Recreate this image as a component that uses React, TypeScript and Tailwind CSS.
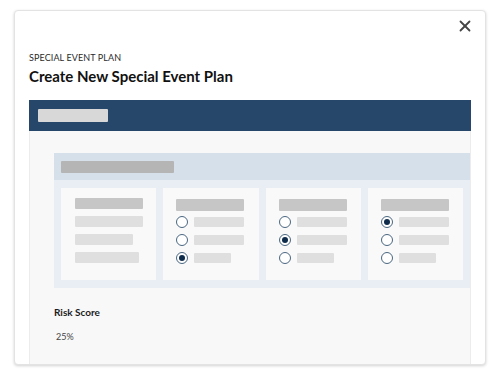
import React from "react";

type Column = {
  kind: "text" | "radio";
  lines: number[];
  selected?: number;
};

const columns: Column[] = [
  { kind: "text", lines: [68, 58, 64] },
  { kind: "radio", lines: [50, 50, 37], selected: 2 },
  { kind: "radio", lines: [50, 50, 37], selected: 1 },
  { kind: "radio", lines: [50, 50, 37], selected: 0 },
];

function Radio({ checked }: { checked: boolean }) {
  return (
    <span className="w-[12px] h-[12px] rounded-full border-[1.5px] border-[#4a6680] bg-white flex items-center justify-center shrink-0">
      {checked && <span className="w-[6px] h-[6px] rounded-full bg-[#0f2b4b]" />}
    </span>
  );
}

function PreviewCard({ col }: { col: Column }) {
  if (col.kind === "text") {
    return (
      <div className="bg-[#f9f9f9] h-[92px] pl-[14px] pt-[10px] flex flex-col gap-[7px]">
        <div className="w-[68px] h-[11px] rounded-[1px] bg-[#c6c6c6]" />
        {col.lines.map((w, i) => (
          <div key={i} className="h-[11px] rounded-[1px] bg-[#dfdfdf]" style={{ width: w }} />
        ))}
      </div>
    );
  }
  return (
    <div className="bg-[#f9f9f9] h-[92px] pl-[13px] pt-[11px] flex flex-col">
      <div className="w-[68px] h-[12px] rounded-[1px] bg-[#c6c6c6] mb-[5px]" />
      <div className="flex flex-col gap-[6px]">
        {col.lines.map((w, i) => (
          <div key={i} className="flex items-center gap-[6px] h-[12px]">
            <Radio checked={col.selected === i} />
            <div className="h-[10px] rounded-[1px] bg-[#dfdfdf]" style={{ width: w }} />
          </div>
        ))}
      </div>
    </div>
  );
}

export default function App() {
  return (
    <div className="w-[500px] h-[376px] bg-white pt-[10px] pl-[14px] font-['Lato','Liberation_Sans',sans-serif]">
      <div className="relative w-[472px] h-[355px] bg-white rounded-[4px] border border-[#e3e3e3] shadow-[0_1px_3px_rgba(0,0,0,0.18)] overflow-hidden flex flex-col">
        {/* close */}
        <button className="absolute top-[9px] right-[14px] w-[12px] h-[12px] flex items-center justify-center text-[#444]">
          <svg width="12" height="12" viewBox="0 0 12 12" fill="none" stroke="currentColor" strokeWidth="1.8" strokeLinecap="round">
            <path d="M1.5 1.5l9 9" />
            <path d="M10.5 1.5l-9 9" />
          </svg>
        </button>

        {/* header */}
        <div className="px-[14px] pt-[41px]">
          <p className="text-[9px] leading-[12px] tracking-[0.1px] text-[#2b2b2b] uppercase">Special Event Plan</p>
          <h1 className="mt-[2px] text-[15px] leading-[20px] font-bold text-[#111]">Create New Special Event Plan</h1>
        </div>

        {/* preview */}
        <div className="mx-[14px] mt-[14px] flex-1 flex flex-col">
          <div className="h-[31px] bg-[#26476a] flex items-center pl-[9px]">
            <div className="w-[70px] h-[13px] rounded-[1px] bg-[#d8d8d8]" />
          </div>
          <div className="flex-1 bg-[#f8f8f8] border-x border-[#ececec] pl-[24px] pt-[22px]">
            <div className="bg-[#e9eef4]">
              <div className="h-[27px] bg-[#d6e0eb] flex items-center pl-[7px]">
                <div className="w-[113px] h-[12px] rounded-[1px] bg-[#b5b5b5]" />
              </div>
              <div className="grid grid-cols-4 gap-[7px] px-[7px] pt-[8px] pb-[8px]">
                {columns.map((c, i) => (
                  <PreviewCard key={i} col={c} />
                ))}
              </div>
            </div>

            <p className="mt-[18px] text-[10px] leading-[12px] font-bold text-[#1c1c1c]">Risk Score</p>
            <p className="mt-[13px] ml-[2px] text-[9px] leading-[12px] text-[#444]">25%</p>
          </div>
        </div>
      </div>
    </div>
  );
}
